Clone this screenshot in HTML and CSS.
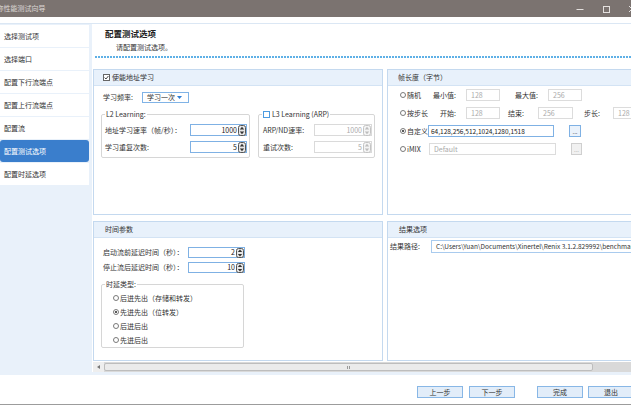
FILE: index.html
```html
<!DOCTYPE html>
<html lang="zh-CN">
<head>
<meta charset="utf-8">
<title>性能测试向导</title>
<link rel="stylesheet" href="styles.css">
</head>
<body>
<div class="titlebar">
  <span class="title">称性能测试向导</span>
  <div class="controls">
    <span class="cbtn"><svg width="8" height="8" viewBox="0 0 8 8"><path d="M0.5 4.5H7.5" stroke="#e4e0de" stroke-width="1"/></svg></span>
    <span class="cbtn"><svg width="8" height="8" viewBox="0 0 8 8"><rect x="1.5" y="1.5" width="6" height="6" fill="none" stroke="#e4e0de" stroke-width="1"/></svg></span>
    <span class="cbtn"><svg width="8" height="8" viewBox="0 0 8 8"><path d="M1 1L7 7M7 1L1 7" stroke="#e4e0de" stroke-width="1"/></svg></span>
  </div>
</div>

<div class="frame">
  <nav class="sidebar">
    <div class="nav-item">选择测试项</div>
    <div class="nav-item">选择端口</div>
    <div class="nav-item">配置下行流端点</div>
    <div class="nav-item">配置上行流端点</div>
    <div class="nav-item">配置流</div>
    <div class="nav-item active">配置测试选项</div>
    <div class="nav-item">配置时延选项</div>
  </nav>

  <main class="main">
    <header class="page-head">
      <h1>配置测试选项</h1>
      <p>请配置测试选项。</p>
    </header>
    <div class="dots"></div>

    <div class="scroller">
      <div class="viewport">
        <div class="panels">

          <section class="panel">
            <div class="panel-head head-check">
              <span class="check checked"><svg width="5" height="5" viewBox="0 0 5 5"><path d="M0.6 2.6L2 4L4.4 1" fill="none" stroke="#333" stroke-width="0.9"/></svg></span>
              <span>使能地址学习</span>
            </div>
            <div class="freq-row">
              <span class="freq-label">学习频率:</span>
              <span class="dropdown"><span>学习一次</span><svg width="5" height="3" viewBox="0 0 5 3"><path d="M0 0H5L2.5 3Z" fill="#2f7fd6"/></svg></span>
            </div>
            <div class="groups">
              <fieldset class="group g-l2">
                <legend>L2 Learning:</legend>
                <div class="form-rows">
                  <div class="frow">
                    <span class="lab-l2">地址学习速率（帧/秒）：</span>
                    <span class="spin sp57"><span class="val">1000</span><svg class="spin-ic" width="8" height="11" viewBox="0 0 8 11"><rect x="0.5" y="0.5" width="7" height="10" rx="2" fill="#e6e6e6" stroke="#555"/><path d="M4 1.8L6.2 4.4H1.8Z M4 9.2L6.2 6.6H1.8Z" fill="#333"/></svg></span>
                  </div>
                  <div class="frow">
                    <span class="lab-l2">学习重复次数:</span>
                    <span class="spin sp57"><span class="val">5</span><svg class="spin-ic" width="8" height="11" viewBox="0 0 8 11"><rect x="0.5" y="0.5" width="7" height="10" rx="2" fill="#e6e6e6" stroke="#555"/><path d="M4 1.8L6.2 4.4H1.8Z M4 9.2L6.2 6.6H1.8Z" fill="#333"/></svg></span>
                  </div>
                </div>
              </fieldset>
              <fieldset class="group g-l3">
                <legend class="legend-check"><span class="check blue"></span><span>L3 Learning (ARP)</span></legend>
                <div class="form-rows">
                  <div class="frow">
                    <span class="lab-l3">ARP/ND速率:</span>
                    <span class="spin sp58 disabled"><span class="val">1000</span><svg class="spin-ic" width="8" height="11" viewBox="0 0 8 11"><rect x="0.5" y="0.5" width="7" height="10" rx="2" fill="#f4f4f4" stroke="#c4c4c4"/><path d="M4 1.8L6.2 4.4H1.8Z M4 9.2L6.2 6.6H1.8Z" fill="#bdbdbd"/></svg></span>
                  </div>
                  <div class="frow">
                    <span class="lab-l3">重试次数:</span>
                    <span class="spin sp58 disabled"><span class="val">5</span><svg class="spin-ic" width="8" height="11" viewBox="0 0 8 11"><rect x="0.5" y="0.5" width="7" height="10" rx="2" fill="#f4f4f4" stroke="#c4c4c4"/><path d="M4 1.8L6.2 4.4H1.8Z M4 9.2L6.2 6.6H1.8Z" fill="#bdbdbd"/></svg></span>
                  </div>
                </div>
              </fieldset>
            </div>
          </section>

          <section class="panel">
            <div class="panel-head head-frame">帧长度（字节）</div>
            <div class="len-rows">
              <div class="lrow">
                <span class="radio"></span>
                <span class="w26">随机</span>
                <span class="w33">最小值:</span>
                <span class="tb w34">128</span>
                <span class="w33 ml15">最大值:</span>
                <span class="tb w34">256</span>
              </div>
              <div class="lrow">
                <span class="radio"></span>
                <span class="w33">按步长</span>
                <span class="w26">开始:</span>
                <span class="tb w34">128</span>
                <span class="w30 ml8">结束:</span>
                <span class="tb w35">256</span>
                <span class="w29 ml11">步长:</span>
                <span class="tb w34">128</span>
              </div>
              <div class="lrow">
                <span class="radio on"></span>
                <span class="w21 under">自定义</span>
                <span class="tb w126 active-tb">64,128,256,512,1024,1280,1518</span>
                <span class="dots-btn ml15">...</span>
              </div>
              <div class="lrow">
                <span class="radio"></span>
                <span class="w22">iMIX</span>
                <span class="tb w127">Default</span>
                <span class="dots-btn ml15 off">...</span>
              </div>
            </div>
          </section>

          <section class="panel">
            <div class="panel-head head-time">时间参数</div>
            <div class="time-rows">
              <div class="frow short">
                <span class="lab-t">启动流前延迟时间（秒）：</span>
                <span class="spin sp57 short"><span class="val">2</span><svg class="spin-ic" width="8" height="10" viewBox="0 0 8 10"><rect x="0.5" y="0.5" width="7" height="9" rx="2" fill="#e6e6e6" stroke="#555"/><path d="M4 1.6L6.2 4H1.8Z M4 8.4L6.2 6H1.8Z" fill="#333"/></svg></span>
              </div>
              <div class="frow short">
                <span class="lab-t">停止流后延迟时间（秒）：</span>
                <span class="spin sp57 short"><span class="val">10</span><svg class="spin-ic" width="8" height="10" viewBox="0 0 8 10"><rect x="0.5" y="0.5" width="7" height="9" rx="2" fill="#e6e6e6" stroke="#555"/><path d="M4 1.6L6.2 4H1.8Z M4 8.4L6.2 6H1.8Z" fill="#333"/></svg></span>
              </div>
            </div>
            <fieldset class="group g-delay">
              <legend>时延类型:</legend>
              <div class="radio-list">
                <div class="ritem"><span class="radio"></span><span>后进先出（存储和转发）</span></div>
                <div class="ritem"><span class="radio on"></span><span>先进先出（位转发）</span></div>
                <div class="ritem"><span class="radio"></span><span>后进后出</span></div>
                <div class="ritem"><span class="radio"></span><span>先进后出</span></div>
              </div>
            </fieldset>
          </section>

          <section class="panel">
            <div class="panel-head head-result">结果选项</div>
            <div class="path-row">
              <span class="lab-path">结果路径:</span>
              <span class="tb path-tb">C:\Users\Yuan\Documents\Xinertel\Renix 3.1.2.829992\benchmark</span>
            </div>
          </section>

        </div>
      </div>
      <div class="hscroll">
        <span class="sb-arrow"><svg width="3" height="4" viewBox="0 0 3 4"><path d="M0 2L3 0V4Z" fill="#777"/></svg></span>
        <span class="sb-thumb"><span class="grip"></span></span>
        <span class="sb-track"></span>
      </div>
    </div>
  </main>
</div>

<footer class="footer">
  <button class="btn">上一步</button>
  <button class="btn gap6">下一步</button>
  <button class="btn gap22">完成</button>
  <button class="btn gap5">退出</button>
</footer>
</body>
</html>
```

FILE: styles.css
```css
* { box-sizing: border-box; margin: 0; padding: 0; }

body {
  width: 631px;
  height: 405px;
  overflow: hidden;
  background: #ffffff;
  font-family: "Noto Sans CJK SC", "Noto Sans", sans-serif;
  font-size: 7px;
  line-height: 1;
  color: #333;
}

/* title bar */
.titlebar {
  height: 17px;
  background: #7b7370;
  display: flex;
  align-items: center;
  color: #dcd7d5;
  overflow: hidden;
}
.title { flex: 1; min-width: 0; margin-left: -3.5px; white-space: nowrap; }
.controls { display: flex; flex-shrink: 0; margin-right: -14px; }
.cbtn { width: 26px; height: 17px; display: flex; align-items: center; justify-content: center; }

/* frame */
.frame {
  margin-top: 6px;
  border-top: 1px solid #dbe7f4;
  background: #e9f1fa;
  height: 352px;
  display: flex;
}

.sidebar {
  width: 89px;
  padding-top: 1px;
  display: flex;
  flex-direction: column;
  gap: 1px;
}
.nav-item {
  height: 22px;
  background: #ffffff;
  padding-left: 4px;
  display: flex;
  align-items: center;
  color: #333;
  white-space: nowrap;
}
.nav-item.active {
  background: #3a7ecc;
  color: #ffffff;
  border-radius: 3px;
}

.main {
  margin-left: 3px;
  width: 539px;
  height: 348px;
  background: #ffffff;
  display: flex;
  flex-direction: column;
}

.page-head { padding: 4px 0 0 13px; }
.page-head h1 { font-size: 8.5px; line-height: 11px; font-weight: bold; color: #222; }
.page-head p { margin-top: 3px; padding-left: 11px; line-height: 10px; color: #333; }

.dots {
  margin: 4px 0 0 3px;
  height: 2px;
  background: repeating-linear-gradient(90deg, #5eb0e6 0 2px, transparent 2px 3px);
}

.scroller { flex: 1; display: flex; flex-direction: column; min-height: 0; }
.viewport { flex: 1; overflow: hidden; padding: 11px 0 0 1px; min-height: 0; }

.panels {
  display: grid;
  grid-template-columns: 290px 290px;
  grid-template-rows: 146px 140px;
  gap: 6px 4px;
  width: max-content;
}

.panel {
  border: 1px solid #c4d9ef;
  background: #ffffff;
}
.panel-head {
  height: 16px;
  background: #e8f1fb;
  border-bottom: 1px solid #d3e3f4;
  display: flex;
  align-items: center;
  color: #333;
  white-space: nowrap;
}
.head-check { padding-left: 9px; gap: 2px; }
.head-frame { padding-left: 10px; }
.head-time { padding-left: 11px; }
.head-result { padding-left: 11px; }

/* checkboxes & radios */
.check {
  width: 7px;
  height: 7px;
  border: 1px solid #666;
  background: #fff;
  display: inline-flex;
  align-items: center;
  justify-content: center;
  flex-shrink: 0;
}
.check.blue { border-color: #4d9be0; }
.radio {
  width: 6px;
  height: 6px;
  border: 1px solid #7a7a7a;
  border-radius: 50%;
  background: #fff;
  display: inline-flex;
  align-items: center;
  justify-content: center;
  flex-shrink: 0;
}
.radio.on::after {
  content: "";
  width: 2px;
  height: 2px;
  border-radius: 50%;
  background: #222;
}

/* learning frequency */
.freq-row {
  margin-top: 6px;
  height: 11px;
  padding-left: 9px;
  display: flex;
  align-items: center;
}
.freq-label { width: 39px; }
.dropdown {
  width: 47px;
  height: 11px;
  border: 1px solid #80b3e6;
  display: flex;
  align-items: center;
  justify-content: space-between;
  padding: 0 6px 0 4px;
}

/* groups */
.groups { display: flex; gap: 8px; padding-left: 7px; margin-top: 7px; }
.group {
  border: 1px solid #d6d6d6;
  border-radius: 2px;
  min-width: 0;
}
.group legend {
  line-height: 8px;
  height: 8px;
  padding: 0 1px;
  color: #333;
  white-space: nowrap;
}
.legend-check { display: flex; align-items: center; gap: 2px; margin-left: -1px; }
.g-l2 { width: 149px; padding: 6px 2px 4px 3px; }
.g-l3 { width: 117px; padding: 6px 2px 4px 4px; }
.form-rows { display: flex; flex-direction: column; gap: 5px; }
.frow { height: 12px; display: flex; align-items: center; white-space: nowrap; }
.frow.short { height: 11px; }
.lab-l2 { width: 85px; }
.lab-l3 { width: 51px; }
.lab-t { width: 85px; }

.spin {
  height: 12px;
  border: 1px solid #7fb1e4;
  background: #fff;
  display: flex;
  align-items: center;
  color: #222;
}
.spin.short { height: 11px; }
.spin .val { flex: 1; text-align: right; padding-right: 1px; }
.spin-ic { flex-shrink: 0; }
.sp57 { width: 57px; }
.sp58 { width: 58px; }
.spin.disabled { border-color: #dadada; color: #aaa; }

/* time panel */
.time-rows { display: flex; flex-direction: column; gap: 4px; padding-left: 9px; margin-top: 9px; }
.g-delay { width: 143px; margin: 7px 0 0 7px; padding: 5px 2px 2px 3px; }
.radio-list { padding-left: 8px; display: flex; flex-direction: column; gap: 4px; }
.ritem { height: 10px; display: flex; align-items: center; gap: 1px; white-space: nowrap; }

/* frame length panel */
.len-rows { padding: 3px 0 0 12px; display: flex; flex-direction: column; gap: 6px; }
.lrow { height: 12px; display: flex; align-items: center; white-space: nowrap; }
.lrow .radio { margin-right: 1px; }
.tb {
  height: 12px;
  border: 1px solid #dcdcdc;
  background: #fff;
  color: #aaa;
  padding-left: 4px;
  display: flex;
  align-items: center;
  white-space: nowrap;
  overflow: hidden;
  flex-shrink: 0;
}
.active-tb { border-color: #7fb1e4; color: #222; position: relative; padding-left: 2px; font-size: 6.5px; }
.under { overflow: visible; }
.w21 { width: 21px; flex-shrink: 0; }
.w22 { width: 22px; flex-shrink: 0; }
.w26 { width: 26px; flex-shrink: 0; }
.w29 { width: 29px; flex-shrink: 0; }
.w30 { width: 30px; flex-shrink: 0; }
.w33 { width: 33px; flex-shrink: 0; }
.w34 { width: 34px; }
.w35 { width: 35px; }
.w126 { width: 126px; }
.w127 { width: 127px; }
.ml8 { margin-left: 8px; }
.ml11 { margin-left: 11px; }
.ml15 { margin-left: 15px; }
.dots-btn {
  width: 12px;
  height: 12px;
  border: 1px solid #7fb1e4;
  background: #eaf2fb;
  display: flex;
  align-items: flex-end;
  justify-content: center;
  padding-bottom: 1px;
  font-size: 6px;
  color: #333;
  flex-shrink: 0;
}
.dots-btn.off { width: 11px; border-color: #cfcfcf; background: #f1f1f1; color: #aaa; }

/* result panel */
.path-row { margin-top: 2px; padding-left: 2px; height: 13px; display: flex; align-items: center; white-space: nowrap; }
.lab-path { width: 41px; flex-shrink: 0; }
.path-tb { width: 260px; height: 13px; border-color: #a9cbee; color: #333; padding-left: 4px; font-size: 6.5px; }

/* scrollbar */
.hscroll {
  height: 10px;
  margin-left: 1px;
  display: flex;
  background: #d9d9d9;
}
.sb-arrow {
  width: 11px;
  background: #eeeeee;
  display: flex;
  align-items: center;
  justify-content: center;
}
.sb-thumb {
  width: 489px;
  margin: 1px 0;
  background: #ebebeb;
  border: 1px solid #bdbdbd;
  border-radius: 2px;
  display: flex;
  align-items: center;
  justify-content: center;
}
.grip { width: 3px; height: 3px; border-left: 1px solid #999; border-right: 1px solid #999; }
.sb-track { flex: 1; }

/* footer */
.footer {
  height: 30px;
  border-bottom: 1px solid #9c9c9c;
  padding: 11px 0 0 417px;
  display: flex;
  align-items: flex-start;
  overflow: hidden;
}
.btn {
  width: 46px;
  height: 12px;
  flex-shrink: 0;
  background: #e2edf9;
  border: 1px solid #88b7e6;
  font-family: "Noto Sans CJK SC", "Noto Sans", sans-serif;
  font-size: 7px;
  color: #333;
  line-height: 10px;
}
.gap6 { margin-left: 6px; }
.gap22 { margin-left: 22px; }
.gap5 { margin-left: 5px; }
```
